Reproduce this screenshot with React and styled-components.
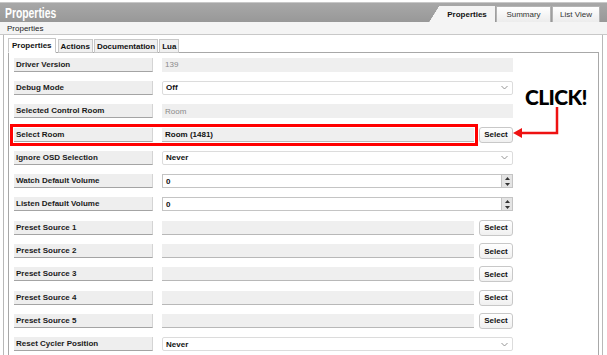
import React from 'react';
import styled, { createGlobalStyle } from 'styled-components';

const GlobalStyle = createGlobalStyle`
    html, body {
        margin: 0;
        padding: 0;
        background: #fff;
    }
    body {
        font-family: "Liberation Sans", Arial, sans-serif;
        color: #111;
    }
`;

const Window = styled.div`
    position: relative;
    width: 607px;
    height: 355px;
    overflow: hidden;
    background: #fff;
`;

const Header = styled.div`
    box-sizing: border-box;
    margin-top: 2px;
    height: 20px;
    display: flex;
    align-items: flex-end;
    background: linear-gradient(to bottom, #a8a8a8 0%, #989898 100%);
    border-top: 1px solid #c8c8c8;
`;

const Title = styled.div`
    align-self: center;
    margin-left: 5px;
    color: #fff;
    font-weight: bold;
    font-size: 14px;
    transform: scaleX(0.74);
    transform-origin: left center;
    white-space: nowrap;
`;

const TopTabs = styled.div`
    margin-left: auto;
    margin-right: 7px;
    display: flex;
    align-items: flex-end;
    height: 17px;
`;

const Slant = styled.div`
    width: 10px;
    height: 16px;
    background: linear-gradient(to bottom right, transparent 50%, #f4f4f4 52%);
`;

const TopTab = styled.div`
    box-sizing: border-box;
    display: flex;
    align-items: center;
    justify-content: center;
    width: ${p => p.w}px;
    height: 16px;
    font-size: 8px;
    font-weight: ${p => (p.active ? 'bold' : 'normal')};
    color: ${p => (p.active ? '#111' : '#333')};
    background: ${p => (p.active ? '#f4f4f4' : 'linear-gradient(to bottom, #ffffff, #ececec)')};
    border: ${p => (p.active ? 'none' : '1px solid #b4b4b4')};
    border-bottom: none;
    margin-left: ${p => (p.active ? 0 : 1)}px;
`;

const SubBar = styled.div`
    box-sizing: border-box;
    height: 13px;
    display: flex;
    align-items: center;
    padding-left: 7px;
    font-size: 8px;
    color: #222;
    background: #f4f4f4;
    border-bottom: 1px solid #c8c8c8;
`;

const Body = styled.div`
    margin: 0 4px 0 3px;
    border-left: 1px solid #b8b8b8;
    border-right: 1px solid #b8b8b8;
    padding: 2px 3px 0 4px;
    height: 320px;
`;

const InnerTabs = styled.div`
    display: flex;
    align-items: flex-end;
    height: 15px;
`;

const InnerTab = styled.div`
    box-sizing: border-box;
    height: ${p => (p.active ? 15 : 14)}px;
    padding: 0 ${p => (p.active ? 3 : 2)}px;
    display: flex;
    align-items: center;
    font-size: 8px;
    font-weight: bold;
    color: #111;
    background: ${p => (p.active ? '#fff' : '#f0f0f0')};
    border: 1px solid #c8c8c8;
    border-bottom: ${p => (p.active ? '1px solid #fff' : '1px solid #c8c8c8')};
    margin-right: ${p => (p.active ? 2 : 1)}px;
    margin-bottom: -1px;
    position: relative;
    z-index: ${p => (p.active ? 1 : 0)};
`;

const Panel = styled.div`
    border: 1px solid #a8a8a8;
    border-bottom: none;
    height: 310px;
    padding: 0 0 0 5px;
    display: flex;
    flex-direction: column;
`;

const Row = styled.div`
    display: flex;
    align-items: center;
    height: 23.3px;
    flex-shrink: 0;
`;

const Main = styled.div`
    display: flex;
    align-items: center;
    gap: 9px;
    width: ${p => p.w}px;
    outline: ${p => (p.hot ? '3px solid #ff0000' : 'none')};
    outline-offset: 1px;
`;

const Label = styled.div`
    box-sizing: border-box;
    width: 139px;
    height: 14px;
    padding-left: 2px;
    display: flex;
    align-items: center;
    font-size: 8px;
    font-weight: bold;
    color: #1a1a1a;
    background: #eeeeee;
    border-bottom: 1px solid #a4a4a4;
    border-right: 1px solid #d4d4d4;
`;

const Field = styled.div`
    box-sizing: border-box;
    flex: 1;
    height: 14px;
    display: flex;
    align-items: center;
    padding-left: 3px;
    font-size: 8px;
    font-weight: ${p => (p.muted ? 'normal' : 'bold')};
    color: ${p => (p.muted ? '#8a8a8a' : '#111')};
    background: ${p => (p.kind === 'input' || p.kind === 'select' ? '#fff' : '#efefef')};
    border: ${p => (p.kind === 'input' ? '1px solid #c4c4c4' : p.kind === 'select' ? '1px solid #dcdcdc' : 'none')};
    border-bottom: ${p => (p.kind === 'flat' ? '1px solid #b8b8b8' : undefined)};
    border-radius: ${p => (p.kind === 'select' ? 2 : 0)}px;
`;

const Chevron = styled.span`
    margin-left: auto;
    margin-right: 4px;
    display: flex;
`;

const Spinner = styled.div`
    margin-left: auto;
    width: 10px;
    height: 12px;
    display: flex;
    flex-direction: column;
    background: #e4e4e4;
    border-left: 1px solid #c4c4c4;
`;

const SpinHalf = styled.div`
    flex: 1;
    display: flex;
    align-items: center;
    justify-content: center;
`;

const SelectButton = styled.button`
    box-sizing: border-box;
    margin-left: 5px;
    width: 34px;
    height: 16px;
    padding: 0;
    font-family: "Liberation Sans", Arial, sans-serif;
    font-size: 8px;
    font-weight: bold;
    color: #111;
    background: linear-gradient(to bottom, #ffffff, #f0f0f0);
    border: 1px solid #c8c8c8;
    border-radius: 3px;
`;

const Callout = styled.div`
    position: absolute;
    left: 512px;
    top: 84px;
    width: 80px;
    height: 60px;
`;

const CalloutText = styled.div`
    position: absolute;
    left: 13px;
    top: 0;
    font-family: Lato, "Open Sans", sans-serif;
    font-weight: 900;
    font-size: 21px;
    letter-spacing: -0.6px;
    color: #000;
`;

const ArrowSvg = styled.svg`
    position: absolute;
    left: 0;
    top: 0;
`;

const ChevronIcon = () => (
    <svg width="7" height="5" viewBox="0 0 7 5">
        <path d="M0.5 1 L3.5 4 L6.5 1" fill="none" stroke="#8a8a8a" strokeWidth="0.9" />
    </svg>
);

const Tri = ({ up }) => (
    <svg width="5" height="3" viewBox="0 0 5 3">
        <path d={up ? 'M0 3 L2.5 0 L5 3 Z' : 'M0 0 L2.5 3 L5 0 Z'} fill="#333" />
    </svg>
);

const ROWS = [
    { label: 'Driver Version', value: '139', kind: 'ro', muted: true },
    { label: 'Debug Mode', value: 'Off', kind: 'select' },
    { label: 'Selected Control Room', value: 'Room', kind: 'ro', muted: true },
    { label: 'Select Room', value: 'Room (1481)', kind: 'flat', button: true, hot: true },
    { label: 'Ignore OSD Selection', value: 'Never', kind: 'select' },
    { label: 'Watch Default Volume', value: '0', kind: 'input', spin: true },
    { label: 'Listen Default Volume', value: '0', kind: 'input', spin: true },
    { label: 'Preset Source 1', value: '', kind: 'flat', button: true },
    { label: 'Preset Source 2', value: '', kind: 'flat', button: true },
    { label: 'Preset Source 3', value: '', kind: 'flat', button: true },
    { label: 'Preset Source 4', value: '', kind: 'flat', button: true },
    { label: 'Preset Source 5', value: '', kind: 'flat', button: true },
    { label: 'Reset Cycler Position', value: 'Never', kind: 'select' }
];

function PropertyRow({ row }) {
    return (
        <Row>
            <Main w={row.button ? 460 : 499} hot={row.hot}>
                <Label>{row.label}</Label>
                <Field kind={row.kind} muted={row.muted}>
                    {row.value}
                    {row.kind === 'select' && <Chevron><ChevronIcon /></Chevron>}
                    {row.spin && (
                        <Spinner>
                            <SpinHalf><Tri up /></SpinHalf>
                            <SpinHalf><Tri /></SpinHalf>
                        </Spinner>
                    )}
                </Field>
            </Main>
            {row.button && <SelectButton>Select</SelectButton>}
        </Row>
    );
}

export default function App() {
    return (
        <Window>
            <GlobalStyle />
            <Header>
                <Title>Properties</Title>
                <TopTabs>
                    <Slant />
                    <TopTab active w={56}>Properties</TopTab>
                    <TopTab w={55}>Summary</TopTab>
                    <TopTab w={48}>List View</TopTab>
                </TopTabs>
            </Header>
            <SubBar>Properties</SubBar>
            <Body>
                <InnerTabs>
                    <InnerTab active>Properties</InnerTab>
                    <InnerTab>Actions</InnerTab>
                    <InnerTab>Documentation</InnerTab>
                    <InnerTab>Lua</InnerTab>
                </InnerTabs>
                <Panel>
                    {ROWS.map(row => <PropertyRow key={row.label} row={row} />)}
                </Panel>
            </Body>
            <Callout>
                <CalloutText>CLICK!</CalloutText>
                <ArrowSvg width="80" height="60" viewBox="0 0 80 60">
                    <path d="M45 23 V49 H9" fill="none" stroke="#ee1111" strokeWidth="2.5" />
                    <path d="M1 49 L10 44 L10 54 Z" fill="#ee1111" />
                </ArrowSvg>
            </Callout>
        </Window>
    );
}
